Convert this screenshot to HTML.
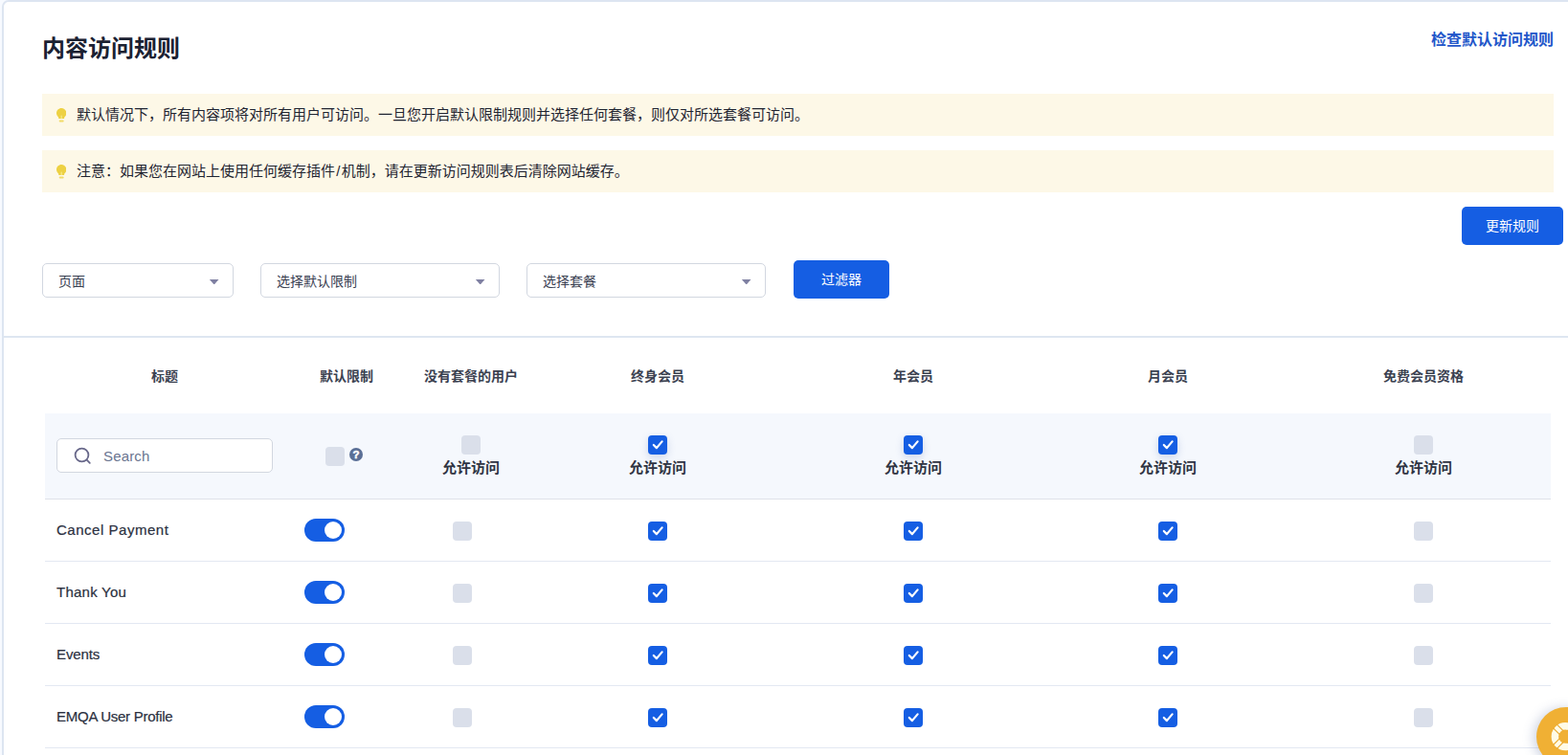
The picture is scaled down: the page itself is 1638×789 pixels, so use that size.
<!DOCTYPE html>
<html lang="zh-CN">
<head>
<meta charset="utf-8">
<title>内容访问规则</title>
<style>
*{box-sizing:border-box;margin:0;padding:0}
html,body{width:1638px;height:789px;overflow:hidden;background:#f7faff}
body{position:relative;font-family:"Liberation Sans","Noto Sans CJK SC",sans-serif;color:#1f2533}
.abs{position:absolute}
#card{position:absolute;left:2px;top:0;width:1700px;height:900px;background:#fff;border:2px solid #dde5f1;border-radius:7px 0 0 0}
h1{position:absolute;left:44px;top:33px;font-size:24px;line-height:36px;font-weight:700;color:#1b2132;white-space:nowrap}
#toplink{position:absolute;right:15px;top:30px;font-size:16px;line-height:24px;font-weight:700;color:#2256c9;white-space:nowrap;text-decoration:none}
.alert{position:absolute;left:44px;width:1579px;height:44px;background:#fdf8e7}
.alert span{position:absolute;left:36px;top:0;line-height:43px;font-size:15px;color:#1f2430;white-space:nowrap}
.alert b.sl{font-weight:400;margin:0 1.300px}
.alert svg{position:absolute;left:14.600px;top:15.200px}
.btn{position:absolute;background:#155ee3;color:#fff;border-radius:5px;font-size:14px;text-align:center;height:40px;line-height:40px}
.sel{position:absolute;top:275px;height:36px;border:1px solid #d2d7e0;border-radius:5px;background:#fff;font-size:14px;line-height:36.400px;padding-left:16px;color:#3a4152}
.sel i{position:absolute;right:14.500px;top:16.100px;width:9.600px;height:5.300px;background:#7f80a2;clip-path:polygon(0 0,100% 0,50% 100%)}
#hr{position:absolute;left:4px;top:351px;width:1640px;height:2px;background:#dee6f1}
.th{position:absolute;top:381.500px;width:200px;margin-left:-100px;text-align:center;font-size:14px;line-height:22px;font-weight:700;color:#3b4150;white-space:nowrap}
#frow{position:absolute;left:47px;top:432px;width:1573px;height:89px;background:#f5f8fd}
.line{position:absolute;left:47px;width:1573px;height:1px;background:#e3e8f2}
.cb{position:absolute;width:20px;height:20px;border-radius:4px;background:#dadfea}
.cb.on{background:#155ee3}
.cb.on.sh{box-shadow:0 3px 8px rgba(60,90,170,.22)}
.cb svg{position:absolute;left:0;top:0}
.allow{position:absolute;top:477px;width:120px;margin-left:-60px;text-align:center;font-size:15px;line-height:24px;font-weight:700;color:#2f3443;white-space:nowrap}
.name{position:absolute;left:59px;font-size:15px;line-height:24px;color:#2b3040;white-space:nowrap;-webkit-text-stroke:.2px #2b3040}
.tg{position:absolute;left:318px;width:42px;height:24px;border-radius:12px;background:#155ee3}
.tg:after{content:"";position:absolute;right:3px;top:3px;width:18px;height:18px;border-radius:50%;background:#fff}
#search{position:absolute;left:59px;top:458px;width:226px;height:36px;border:1px solid #d2d7e0;border-radius:5px;background:#fff}
#search span{position:absolute;left:48px;top:.500px;line-height:34px;font-size:15px;color:#6a7590;letter-spacing:.16px}
#search svg{position:absolute;left:17px;top:8px}
#help{position:absolute;left:1605px;top:738.500px;width:62px;height:62px;border-radius:50%;background:#f0b034;box-shadow:-3px 1px 12px rgba(90,110,160,.3)}
</style>
</head>
<body>
<div id="card"></div>
<h1>内容访问规则</h1>
<a id="toplink">检查默认访问规则</a>

<div class="alert" style="top:98px"><svg width="10.4" height="14.8" viewBox="0 0 10.4 14.8"><path d="M5.2 0C2.3 0 0 2.3 0 5.2c0 1.500.7 2.900 1.700 3.800.5.500.6 1 .6 2h5.800c0-1 .1-1.500.6-2 1-.9 1.700-2.300 1.700-3.800C10.400 2.300 8.100 0 5.200 0z" fill="#edd143"/><rect x="4.500" y="7.600" width="1.400" height="3.500" fill="#f7e77e"/><rect x="2.700" y="12.400" width="5" height="2" rx="1" fill="#f1db68"/></svg><span>默认情况下，所有内容项将对所有用户可访问。一旦您开启默认限制规则并选择任何套餐，则仅对所选套餐可访问。</span></div>
<div class="alert" style="top:157px"><svg width="10.4" height="14.8" viewBox="0 0 10.4 14.8"><path d="M5.2 0C2.3 0 0 2.3 0 5.2c0 1.500.7 2.900 1.700 3.800.5.500.6 1 .6 2h5.800c0-1 .1-1.500.6-2 1-.9 1.700-2.300 1.700-3.800C10.400 2.300 8.100 0 5.200 0z" fill="#edd143"/><rect x="4.500" y="7.600" width="1.400" height="3.500" fill="#f7e77e"/><rect x="2.700" y="12.400" width="5" height="2" rx="1" fill="#f1db68"/></svg><span>注意：如果您在网站上使用任何缓存插件<b class="sl">/</b>机制，请在更新访问规则表后清除网站缓存。</span></div>

<div class="btn" style="left:1527px;top:216px;width:106px">更新规则</div>

<div class="sel" style="left:44px;width:200px">页面<i></i></div>
<div class="sel" style="left:272px;width:250px">选择默认限制<i></i></div>
<div class="sel" style="left:550px;width:250px">选择套餐<i></i></div>
<div class="btn" style="left:829px;top:272px;width:100px">过滤器</div>

<div id="hr"></div>

<div class="th" style="left:172px">标题</div>
<div class="th" style="left:362px">默认限制</div>
<div class="th" style="left:492px">没有套餐的用户</div>
<div class="th" style="left:687px">终身会员</div>
<div class="th" style="left:954px">年会员</div>
<div class="th" style="left:1220px">月会员</div>
<div class="th" style="left:1487px">免费会员资格</div>

<div id="frow"></div>
<div id="search"><svg width="20" height="20" viewBox="0 0 20 20" fill="none" stroke="#68688a" stroke-width="1.800" stroke-linecap="round"><circle cx="8.500" cy="8.500" r="6.900"/><path d="M13.700 13.700L16.800 16.800"/></svg><span>Search</span></div>

<!--ROWS-->
<div id="rows">
<div class="cb" style="left:340px;top:467px"></div>
<svg class="abs" style="left:365.300px;top:468.300px" width="14" height="14" viewBox="0 0 14 14"><circle cx="7" cy="7" r="7" fill="#5a6f96"/><text x="7" y="11.200" text-anchor="middle" font-family="Liberation Sans, sans-serif" font-weight="700" font-size="11.500" fill="#fff" stroke="#fff" stroke-width=".5">?</text></svg>
<div class="cb" style="left:482px;top:455px"></div>
<div class="allow" style="left:492px">允许访问</div>
<div class="cb on sh" style="left:677px;top:455px"><svg width="20" height="20" viewBox="0 0 20 20"><path d="M5.800 10L8.900 13.100 14.600 6.400" fill="none" stroke="#fff" stroke-width="2.200" stroke-linecap="round" stroke-linejoin="round"/></svg></div>
<div class="allow" style="left:687px">允许访问</div>
<div class="cb on sh" style="left:944px;top:455px"><svg width="20" height="20" viewBox="0 0 20 20"><path d="M5.800 10L8.900 13.100 14.600 6.400" fill="none" stroke="#fff" stroke-width="2.200" stroke-linecap="round" stroke-linejoin="round"/></svg></div>
<div class="allow" style="left:954px">允许访问</div>
<div class="cb on sh" style="left:1210px;top:455px"><svg width="20" height="20" viewBox="0 0 20 20"><path d="M5.800 10L8.900 13.100 14.600 6.400" fill="none" stroke="#fff" stroke-width="2.200" stroke-linecap="round" stroke-linejoin="round"/></svg></div>
<div class="allow" style="left:1220px">允许访问</div>
<div class="cb" style="left:1477px;top:455px"></div>
<div class="allow" style="left:1487px">允许访问</div>
<div class="line" style="top:521px;background:#dfe2e9"></div>
<div class="name" style="top:542px;letter-spacing:0.52px">Cancel Payment</div>
<div class="tg" style="top:542px"></div>
<div class="cb" style="left:473px;top:545px"></div>
<div class="cb on" style="left:677px;top:545px"><svg width="20" height="20" viewBox="0 0 20 20"><path d="M5.800 10L8.900 13.100 14.600 6.400" fill="none" stroke="#fff" stroke-width="2.200" stroke-linecap="round" stroke-linejoin="round"/></svg></div>
<div class="cb on" style="left:944px;top:545px"><svg width="20" height="20" viewBox="0 0 20 20"><path d="M5.800 10L8.900 13.100 14.600 6.400" fill="none" stroke="#fff" stroke-width="2.200" stroke-linecap="round" stroke-linejoin="round"/></svg></div>
<div class="cb on" style="left:1210px;top:545px"><svg width="20" height="20" viewBox="0 0 20 20"><path d="M5.800 10L8.900 13.100 14.600 6.400" fill="none" stroke="#fff" stroke-width="2.200" stroke-linecap="round" stroke-linejoin="round"/></svg></div>
<div class="cb" style="left:1477px;top:545px"></div>
<div class="line" style="top:586px"></div>
<div class="name" style="top:607px;letter-spacing:0.25px">Thank You</div>
<div class="tg" style="top:607px"></div>
<div class="cb" style="left:473px;top:610px"></div>
<div class="cb on" style="left:677px;top:610px"><svg width="20" height="20" viewBox="0 0 20 20"><path d="M5.800 10L8.900 13.100 14.600 6.400" fill="none" stroke="#fff" stroke-width="2.200" stroke-linecap="round" stroke-linejoin="round"/></svg></div>
<div class="cb on" style="left:944px;top:610px"><svg width="20" height="20" viewBox="0 0 20 20"><path d="M5.800 10L8.900 13.100 14.600 6.400" fill="none" stroke="#fff" stroke-width="2.200" stroke-linecap="round" stroke-linejoin="round"/></svg></div>
<div class="cb on" style="left:1210px;top:610px"><svg width="20" height="20" viewBox="0 0 20 20"><path d="M5.800 10L8.900 13.100 14.600 6.400" fill="none" stroke="#fff" stroke-width="2.200" stroke-linecap="round" stroke-linejoin="round"/></svg></div>
<div class="cb" style="left:1477px;top:610px"></div>
<div class="line" style="top:651px"></div>
<div class="name" style="top:672px;letter-spacing:-0.10px">Events</div>
<div class="tg" style="top:672px"></div>
<div class="cb" style="left:473px;top:675px"></div>
<div class="cb on" style="left:677px;top:675px"><svg width="20" height="20" viewBox="0 0 20 20"><path d="M5.800 10L8.900 13.100 14.600 6.400" fill="none" stroke="#fff" stroke-width="2.200" stroke-linecap="round" stroke-linejoin="round"/></svg></div>
<div class="cb on" style="left:944px;top:675px"><svg width="20" height="20" viewBox="0 0 20 20"><path d="M5.800 10L8.900 13.100 14.600 6.400" fill="none" stroke="#fff" stroke-width="2.200" stroke-linecap="round" stroke-linejoin="round"/></svg></div>
<div class="cb on" style="left:1210px;top:675px"><svg width="20" height="20" viewBox="0 0 20 20"><path d="M5.800 10L8.900 13.100 14.600 6.400" fill="none" stroke="#fff" stroke-width="2.200" stroke-linecap="round" stroke-linejoin="round"/></svg></div>
<div class="cb" style="left:1477px;top:675px"></div>
<div class="line" style="top:716px"></div>
<div class="name" style="top:737px;letter-spacing:-0.26px">EMQA User Profile</div>
<div class="tg" style="top:737px"></div>
<div class="cb" style="left:473px;top:740px"></div>
<div class="cb on" style="left:677px;top:740px"><svg width="20" height="20" viewBox="0 0 20 20"><path d="M5.800 10L8.900 13.100 14.600 6.400" fill="none" stroke="#fff" stroke-width="2.200" stroke-linecap="round" stroke-linejoin="round"/></svg></div>
<div class="cb on" style="left:944px;top:740px"><svg width="20" height="20" viewBox="0 0 20 20"><path d="M5.800 10L8.900 13.100 14.600 6.400" fill="none" stroke="#fff" stroke-width="2.200" stroke-linecap="round" stroke-linejoin="round"/></svg></div>
<div class="cb on" style="left:1210px;top:740px"><svg width="20" height="20" viewBox="0 0 20 20"><path d="M5.800 10L8.900 13.100 14.600 6.400" fill="none" stroke="#fff" stroke-width="2.200" stroke-linecap="round" stroke-linejoin="round"/></svg></div>
<div class="cb" style="left:1477px;top:740px"></div>
<div class="line" style="top:781px"></div>
</div>
<!--/ROWS-->

<div id="help"><svg width="62" height="62" viewBox="0 0 62 62"><circle cx="30.2" cy="30.7" r="10.850" fill="none" stroke="#fffbe6" stroke-width="7.500"/><path d="M36.00 32.68L43.07 39.75M32.18 36.50L39.25 43.57M28.22 36.50L21.15 43.57M24.40 32.68L17.33 39.75M24.40 28.72L17.33 21.65M28.22 24.90L21.15 17.83M32.18 24.90L39.25 17.83M36.00 28.72L43.07 21.65" stroke="#e9a92f" stroke-width="1.100" fill="none"/></svg></div>
</body>
</html>
